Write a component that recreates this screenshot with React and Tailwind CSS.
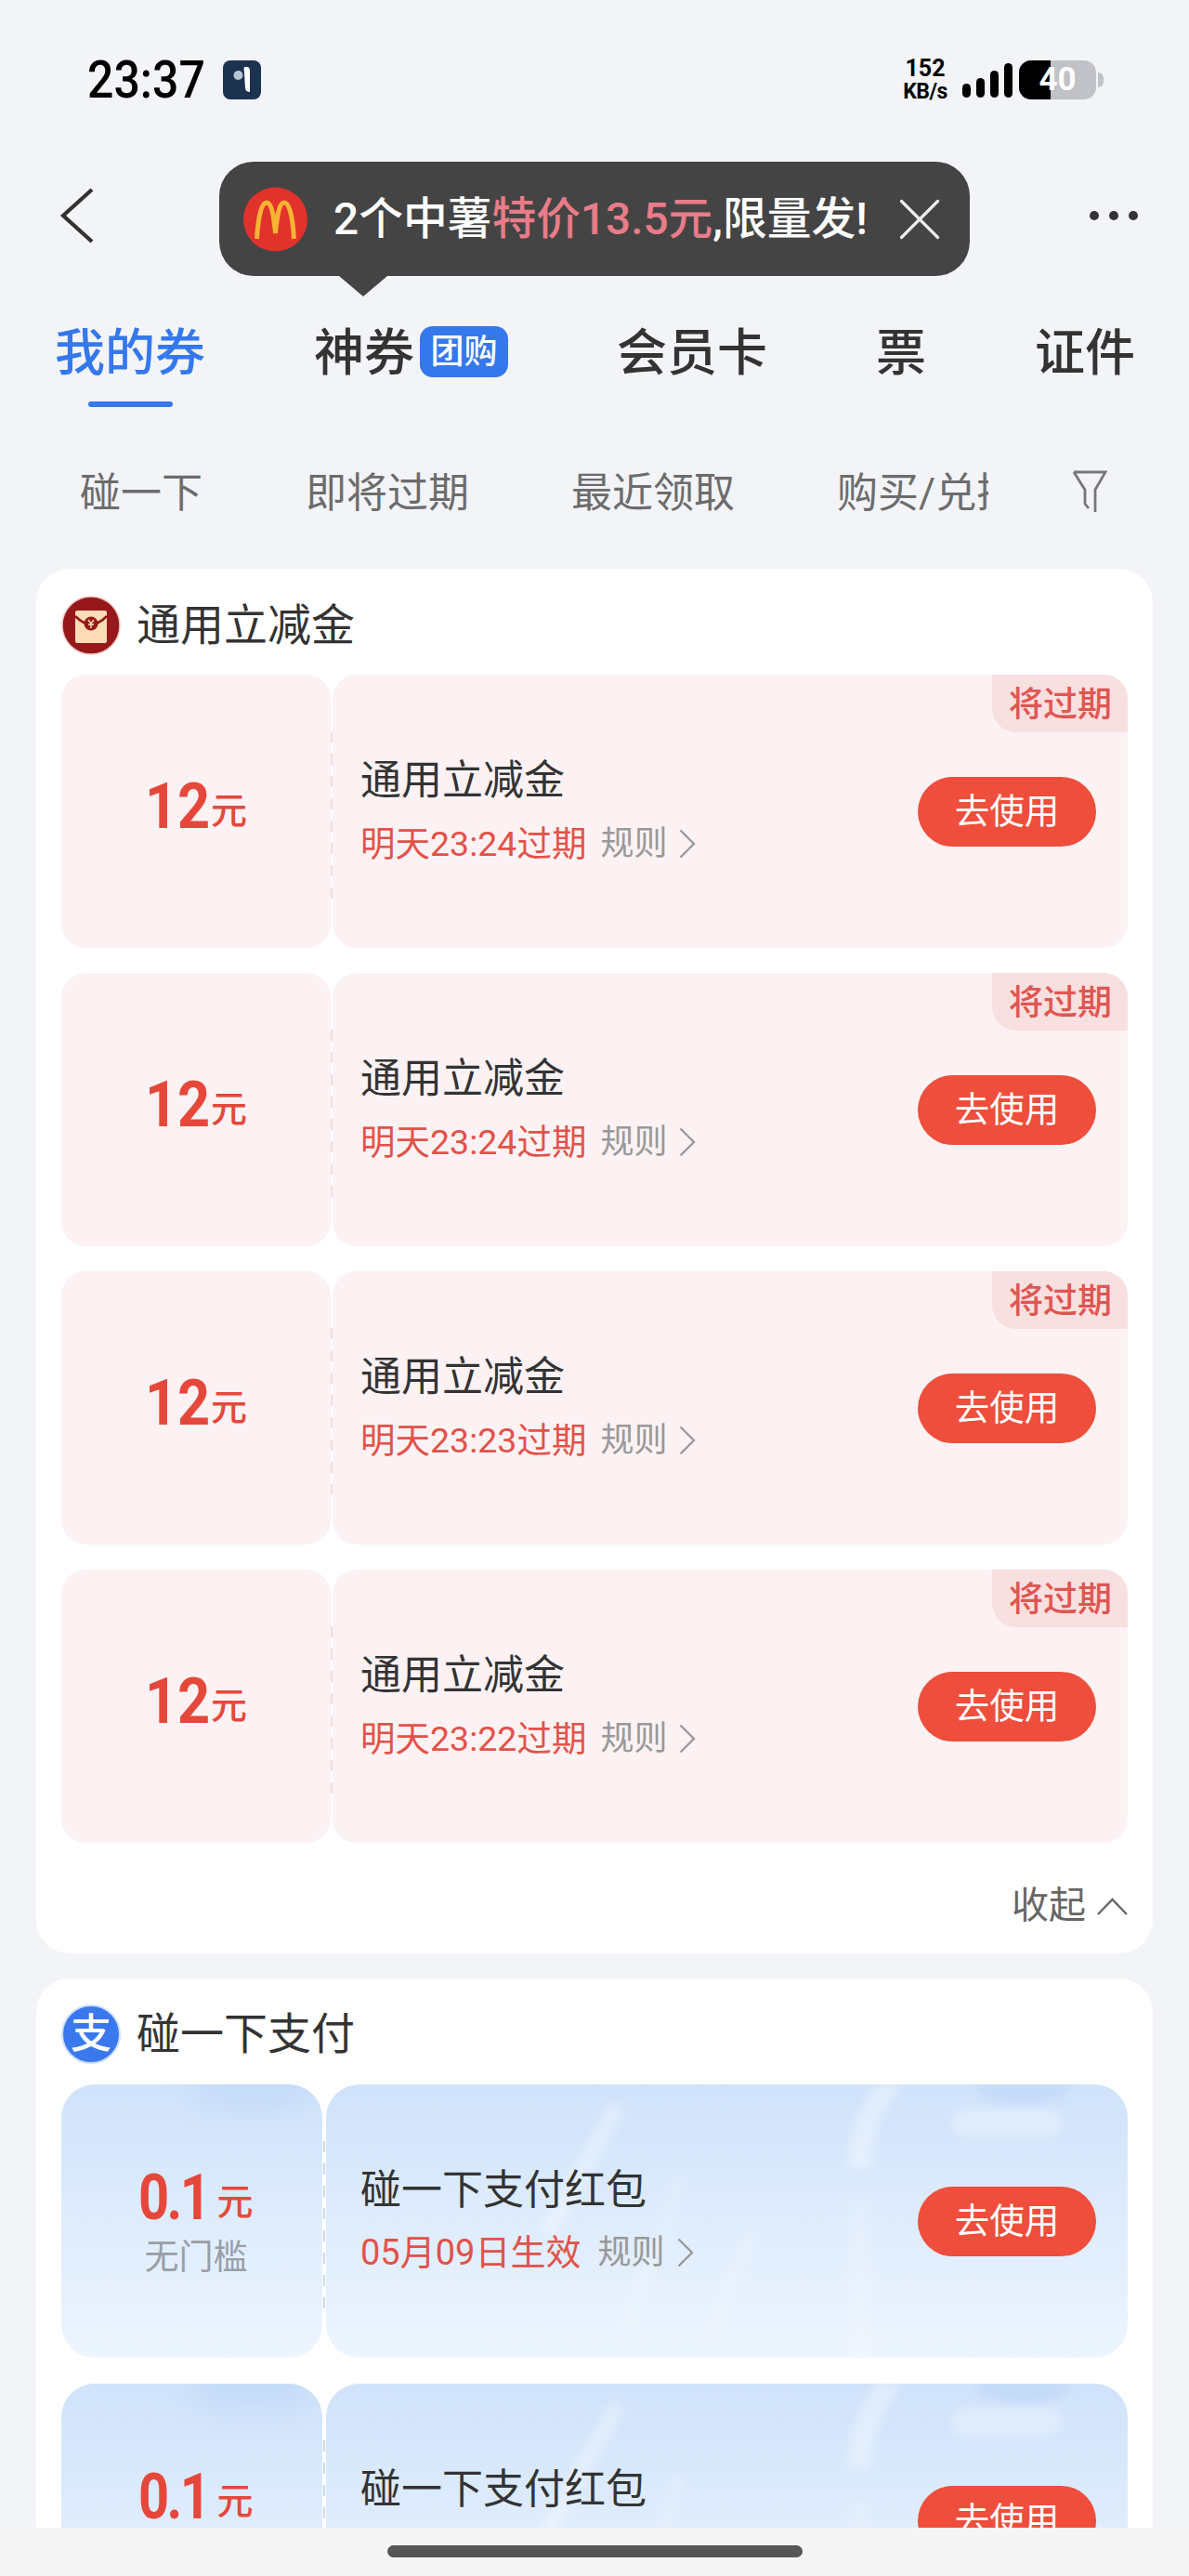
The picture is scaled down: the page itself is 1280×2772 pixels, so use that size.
import { X } from 'lucide-react';

const redCoupons = ['明天23:24过期', '明天23:24过期', '明天23:23过期', '明天23:22过期'];

const Chevron = ({ className, color = '#9a9a9a' }) => (
  <svg className={className} viewBox="0 0 18 32" fill="none">
    <path d="M1.5 1.5 16 16 1.5 30.5" stroke={color} strokeWidth="2.4" />
  </svg>
);

const StatusBar = () => (
  <div className="flex h-[174px] items-center justify-between pb-[3px] pl-[94px] pr-[92px]">
    <div className="flex items-center gap-[19px]">
      <span className="scale-y-110 text-[50px] font-medium leading-none text-black">23:37</span>
      <div className="flex h-[42px] w-[41px] items-center justify-center rounded-lg bg-[#1c3350]">
        <svg className="h-[30px] w-[24px]" viewBox="0 0 24 30" fill="none">
          <circle cx="8.5" cy="10" r="5" fill="#b9c4d2" />
          <path d="M15 1h3c2 0 3 2 3 4v23c-3 0-5-2-5-4l-1-16c0-3-1-5 0-7z" fill="#fff" />
        </svg>
      </div>
    </div>
    <div className="flex items-center">
      <div className="flex w-[52px] flex-col items-center whitespace-nowrap font-bold text-black">
        <span className="text-[25px] leading-[26px]">152</span>
        <span className="text-[23px] leading-[24px] tracking-[-0.5px]">KB/s</span>
      </div>
      <div className="ml-[14px] flex h-[38px] items-end gap-[6px]">
        <div className="h-[15px] w-[9px] rounded-full bg-black" />
        <div className="h-[21px] w-[9px] rounded-full bg-black" />
        <div className="h-[29px] w-[9px] rounded-full bg-black" />
        <div className="h-[37px] w-[9px] rounded-full bg-black" />
      </div>
      <div className="relative ml-[7px] flex h-[42px] w-[83px] items-center justify-center overflow-hidden rounded-[13px] bg-[#c1c2c7]">
        <div className="absolute inset-y-0 left-0 w-[34px] bg-black" />
        <span className="relative text-[35px] font-bold leading-none text-white">40</span>
      </div>
      <div className="ml-[2px] h-[16px] w-[6px] rounded-r-full bg-[#c1c2c7]" />
    </div>
  </div>
);

const McdLogo = () => (
  <svg className="h-[70px] w-[69px] shrink-0" viewBox="0 0 69 70" fill="none">
    <circle cx="34.5" cy="35" r="34.5" fill="#e1322b" />
    <path
      d="M14.5 56C16 30 20 17 25 17c6 0 8 18 9.5 33C36 35 38 17 44 17c5 0 9 13 10.5 39"
      stroke="#f7b334"
      strokeWidth="5"
    />
  </svg>
);

const NavBar = () => (
  <div className="relative flex h-[116px] items-center justify-between pl-[64px] pr-[55px]">
    <svg className="h-[60px] w-[37px]" viewBox="0 0 37 60" fill="none">
      <path d="M35 2 4 30l31 28" stroke="#333" strokeWidth="4.2" />
    </svg>
    <div className="flex gap-[11px]">
      <div className="h-[10px] w-[10px] rounded-full bg-[#333]" />
      <div className="h-[10px] w-[10px] rounded-full bg-[#333]" />
      <div className="h-[10px] w-[10px] rounded-full bg-[#333]" />
    </div>

    {/* promo bubble */}
    <div className="absolute left-[236px] top-0 flex h-[123px] w-[808px] items-center rounded-[37px] bg-[#444] pl-[26px]">
      <McdLogo />
      <span className="ml-[28px] whitespace-nowrap text-[47.75px] font-medium leading-[56px] text-white">
        2个中薯<span className="text-[#e87c88]">特价13.5元</span>,限量发!
      </span>
      <X className="absolute left-[715px] top-[23px] h-[78px] w-[78px] text-[#eee]" strokeWidth={1} />
      <div className="absolute left-[129px] top-[123px] h-0 w-0 border-x-[26px] border-t-[22px] border-x-transparent border-t-[#444]" />
    </div>
  </div>
);

const Tabs = () => (
  <div className="flex h-[154px] items-start gap-[117px] pl-[59px] pt-[61px] text-[54px] font-medium leading-[59px] text-[#333]">
    <div className="flex flex-col items-center">
      <span className="text-[#3478ec]">我的券</span>
      <div className="mt-[22px] h-[6px] w-[91px] rounded-full bg-[#3478ec]" />
    </div>
    <div className="flex items-start gap-[6px]">
      <span>神券</span>
      <span className="flex h-[55px] w-[95px] items-center justify-center rounded-[14px] bg-[#3478ec] text-[36px] font-medium leading-[40px] text-white">
        团购
      </span>
    </div>
    <span>会员卡</span>
    <span>票</span>
    <span>证件</span>
  </div>
);

const SubTabs = () => (
  <div className="flex h-[168px] items-center pl-[86px] pt-[6px] text-[44px] leading-[60px] text-[#6c6c6c]">
    <div className="flex w-[978px] gap-[110px] overflow-hidden whitespace-nowrap">
      <span>碰一下</span>
      <span className="ml-[1px]">即将过期</span>
      <span>最近领取</span>
      <span>购买/兑换</span>
    </div>
    <svg className="mb-[6px] ml-[90px] h-[45px] w-[38px]" viewBox="0 0 38 45" fill="none">
      <path d="M2 2h34L25 21v24M2 2l12 19v15l4 5" stroke="#777" strokeWidth="2.8" />
    </svg>
  </div>
);

const EnvelopeIcon = () => (
  <svg className="h-[64px] w-[64px] shrink-0" viewBox="0 0 64 64" fill="none">
    <circle cx="32" cy="32" r="31" fill="#96181a" stroke="#f2c6c2" strokeWidth="1.5" />
    <rect x="15" y="16" width="34" height="35" rx="2" fill="#fbdcb6" />
    <path d="M15 22c6 6 12 9 17 9s11-3 17-9" stroke="#96181a" strokeWidth="2.5" />
    <circle cx="32" cy="30" r="7.5" fill="#96181a" />
    <path d="M29 26l3 4 3-4M32 30v5M29 31h6" stroke="#fbdcb6" strokeWidth="1.4" />
  </svg>
);

const SectionHeader = ({ icon, title, className }) => (
  <div className={`flex items-center gap-[17px] ${className}`}>
    {icon}
    <span className="text-[47px] leading-[56px] text-[#333]">{title}</span>
  </div>
);

const UseButton = () => (
  <button className="relative flex h-[75px] w-[192px] shrink-0 items-center justify-center rounded-full bg-[#ee4e3b] pt-[1px] text-[37.5px] leading-none text-white">
    去使用
  </button>
);

const Dashes = ({ color, className }) => (
  <svg className={`absolute w-[2px] ${className}`} viewBox="0 0 2 181" preserveAspectRatio="none" fill="none">
    <path d="M1 0v181" stroke={color} strokeWidth="2" strokeDasharray="12 12" />
  </svg>
);

const RedCoupon = ({ date }) => (
  <div className="relative flex h-[294px] gap-[2px]">
    <div className="flex w-[290px] items-baseline justify-center rounded-[26px] bg-[#fdf2f3] pt-[106px] text-[#e5483b]">
      <span className="w-[69px] origin-left scale-x-90 whitespace-nowrap text-[68px] font-bold leading-[72px]">12</span>
      <span className="ml-[2px] -translate-y-[5px] text-[39px] font-medium leading-none">元</span>
    </div>
    <Dashes color="#efdfe2" className="left-[290px] top-[61px] h-[181px]" />
    <div className="relative flex flex-1 items-center justify-between rounded-[26px] bg-[#fdf2f3] pl-[30px] pr-[34px]">
      <div className="pb-[2px]">
        <div className="text-[44px] leading-[50px] text-[#333]">通用立减金</div>
        <div className="mt-[22px] flex items-center text-[37.5px] leading-[42px] text-[#e2524a]">
          <span>{date}</span>
          <span className="ml-[15px] text-[36px] text-[#999]">规则</span>
          <Chevron className="ml-[13px] h-[32px] w-[18px]" />
        </div>
      </div>
      <UseButton />
      <div className="absolute right-0 top-0 flex h-[62px] w-[146px] items-center justify-center rounded-bl-[26px] rounded-tr-[26px] bg-[#f8dfe0] pl-[1px] pt-[2px] text-[37px] font-medium leading-none text-[#df5650]">
        将过期
      </div>
    </div>
  </div>
);

// soft light streaks on the blue coupon background
const BlueStreaks = () => (
  <svg className="absolute inset-0 h-full w-full blur-[5px]" viewBox="0 0 862 294" fill="none">
    <path d="M310 30 240 155" stroke="#fff" strokeOpacity=".3" strokeWidth="18" strokeLinecap="round" />
    <path d="M380 105 325 254" stroke="#fff" strokeOpacity=".16" strokeWidth="16" strokeLinecap="round" />
    <path d="M455 165 415 265" stroke="#fff" strokeOpacity=".16" strokeWidth="18" strokeLinecap="round" />
    <path d="M610-4Q574 36 574 90" stroke="#fff" strokeOpacity=".35" strokeWidth="24" />
    <path d="M574 125V294" stroke="#fff" strokeOpacity=".16" strokeWidth="24" />
    <rect x="673" y="27" width="118" height="28" rx="14" fill="#fff" fillOpacity=".3" />
    <ellipse cx="750" cy="2" rx="50" ry="18" fill="#b7d2f7" fillOpacity=".5" />
  </svg>
);

const BlueCoupon = () => (
  <div className="relative flex h-[294px] gap-[4px]">
    <div className="relative flex w-[281px] flex-col items-center justify-center overflow-hidden rounded-[36px] bg-gradient-to-b from-[#d0e3fb] to-[#edf5fe] pl-[9px] pt-[5px]">
      <div className="absolute right-[10px] top-[-30px] h-[60px] w-[130px] rounded-full bg-[#b7d2f7] opacity-40 blur-[14px]" />
      <div className="relative flex items-baseline text-[#e5483b]">
        <span className="w-[72px] origin-left scale-x-[.85] whitespace-nowrap text-[68px] font-bold leading-[60px] tracking-[-3px]">0.1</span>
        <span className="ml-[12px] -translate-y-[5px] text-[39px] font-medium leading-none">元</span>
      </div>
      <span className="relative mt-[15px] text-[37px] leading-[40px] text-[#9a9ea5]">无门槛</span>
    </div>
    <Dashes color="#c9d9ee" className="left-[282px] top-[61px] h-[181px]" />
    <div className="relative flex flex-1 items-center justify-between overflow-hidden rounded-[36px] bg-gradient-to-b from-[#d0e3fb] to-[#edf5fe] pl-[37px] pr-[34px]">
      <BlueStreaks />
      <div className="relative pb-[3px]">
        <div className="text-[44px] leading-[50px] text-[#333]">碰一下支付红包</div>
        <div className="mt-[21px] flex items-center text-[38px] leading-[42px] text-[#e2524a]">
          <span>05月09日生效</span>
          <span className="ml-[18px] text-[36px] text-[#999]">规则</span>
          <Chevron className="ml-[14px] h-[32px] w-[18px]" />
        </div>
      </div>
      <UseButton />
    </div>
  </div>
);

export default function App() {
  return (
    <div className="flex h-[2772px] w-[1280px] flex-col overflow-hidden bg-[#f2f4f8] font-['Roboto','Noto_Sans_CJK_SC',sans-serif]">
      <div className="min-h-0 flex-1 overflow-hidden">
        <StatusBar />
        <NavBar />
        <Tabs />
        <SubTabs />

        <div className="mx-[39px] flex flex-col gap-[27px]">
          {/* 通用立减金 */}
          <section className="rounded-[36px] bg-white px-[27px] pt-[29px]">
            <SectionHeader icon={<EnvelopeIcon />} title="通用立减金" className="mb-[21px]" />
            <div className="flex flex-col gap-[27px]">
              {redCoupons.map((date, i) => (
                <RedCoupon key={i} date={date} />
              ))}
            </div>
            <div className="flex h-[119px] items-center justify-end gap-[12px] pt-[17px] text-[40px] leading-[48px] text-[#666]">
              <span>收起</span>
              <svg className="h-[19px] w-[33px]" viewBox="0 0 33 19" fill="none">
                <path d="M1 18 16.5 2 32 18" stroke="#666" strokeWidth="2.4" />
              </svg>
            </div>
          </section>

          {/* 碰一下支付 */}
          <section className="rounded-[36px] bg-white px-[27px] pt-[28px]">
            <SectionHeader
              icon={
                <div className="flex h-[64px] w-[64px] shrink-0 items-center justify-center rounded-full border-2 border-[#cfe0fb] bg-[#3a78ee] text-[44px] font-medium leading-[50px] text-white">
                  支
                </div>
              }
              title="碰一下支付"
              className="mb-[22px]"
            />
            <div className="flex flex-col gap-[28px]">
              <BlueCoupon />
              <BlueCoupon />
            </div>
          </section>
        </div>
      </div>

      {/* home indicator */}
      <div className="flex h-[52px] shrink-0 items-start justify-center bg-[#f5f5f5] pt-[19px]">
        <div className="h-[13px] w-[447px] rounded-full bg-[#565656]" />
      </div>
    </div>
  );
}
